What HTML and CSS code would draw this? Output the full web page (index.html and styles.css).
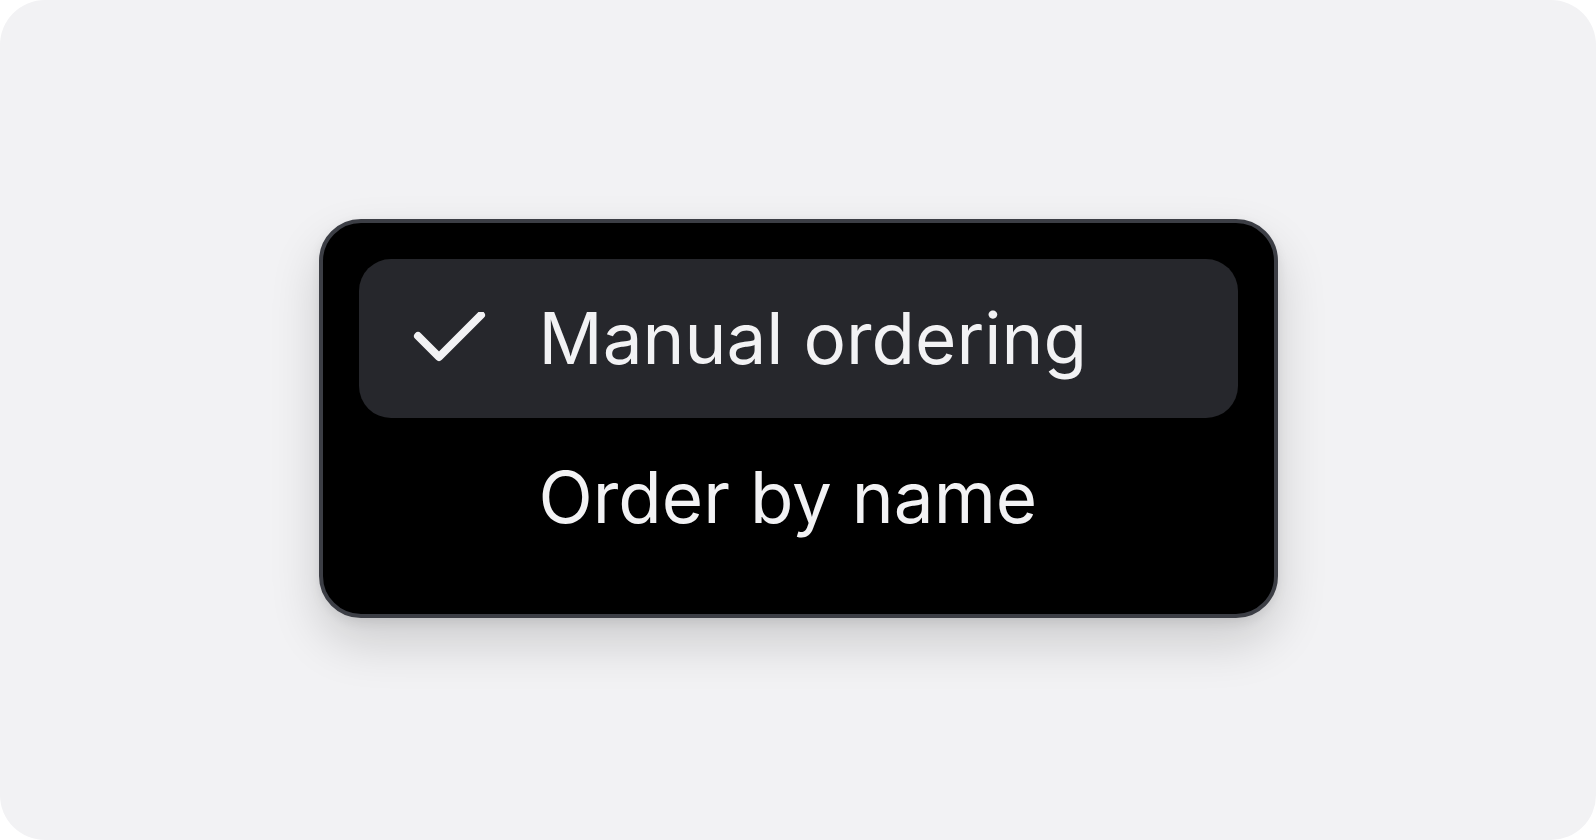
FILE: index.html
```html
<!DOCTYPE html>
<html lang="en">
<head>
<meta charset="utf-8">
<title>Sort menu</title>
<link rel="stylesheet" href="styles.css">
</head>
<body>
    <div class="stage">
        <ul class="menu">
            <li class="item active">
                <span class="mark">
                    <svg width="76" height="54" viewBox="0 0 76 54">
                        <polyline points="5,24 26,45 68,3" fill="none" stroke="#f2f2f4" stroke-width="8" stroke-linecap="round" stroke-linejoin="round"/>
                    </svg>
                </span>
                <span class="label">Manual ordering</span>
            </li>
            <li class="item">
                <span class="mark"></span>
                <span class="label">Order by name</span>
            </li>
        </ul>
    </div>
</body>
</html>
```

FILE: styles.css
```css
*{margin:0;padding:0;box-sizing:border-box}
html,body{width:100%;height:100%;background:#fff;overflow:hidden}
body{font-family:Inter,"Noto Sans",sans-serif}
.stage{width:1596px;height:840px;background:#f2f2f4;border-radius:45px;display:flex;align-items:center;justify-content:center;padding-bottom:3px}
.menu{list-style:none;width:959px;height:399px;background:#000;border:4px solid #3c3e45;border-radius:42px;padding:36px 36px;box-shadow:0 24px 50px rgba(0,0,0,0.16),0 4px 12px rgba(0,0,0,0.08);display:flex;flex-direction:column}
.item{height:159px;border-radius:32px;display:flex;align-items:center;color:#f2f2f4}
.item.active{background:#26272c}
.mark{width:180px;height:54px;padding-left:54px;display:flex;align-items:center}
.label{font-size:71px;font-weight:420;line-height:1;letter-spacing:0}
```
